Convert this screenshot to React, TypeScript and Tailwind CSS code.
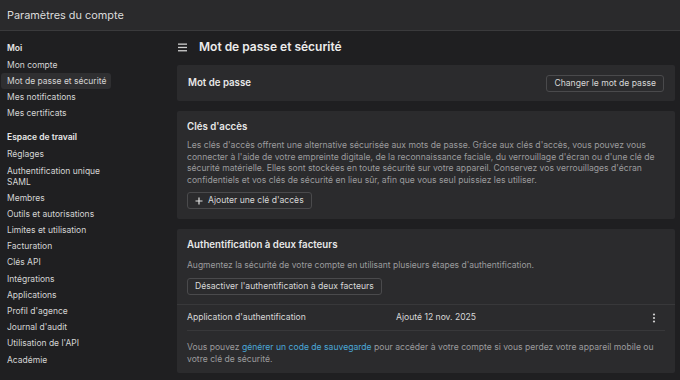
const moi = ['Mon compte', 'Mot de passe et sécurité', 'Mes notifications', 'Mes certificats'];
const workspace = [
  'Réglages',
  'Authentification unique SAML',
  'Membres',
  'Outils et autorisations',
  'Limites et utilisation',
  'Facturation',
  'Clés API',
  'Intégrations',
  'Applications',
  "Profil d'agence",
  "Journal d'audit",
  "Utilisation de l'API",
  'Académie',
];

function NavItem({ label, active }: { label: string; active?: boolean }) {
  const wraps = label.includes('SAML');
  return (
    <div
      className={`px-[6px] py-[2.6px] rounded-[3px] text-[8.5px] leading-[11px] text-[#d4d4d4] ${
        wraps ? '' : 'whitespace-nowrap'
      } ${active ? 'bg-[#2f2f31]' : ''}`}
    >
      {label}
    </div>
  );
}

function Button({ children }: { children: React.ReactNode }) {
  return (
    <button
      type="button"
      className="flex items-center gap-[5px] h-[17px] px-[7px] rounded-[3px] border border-[#4a4a4c] bg-[#2b2b2d] text-[8.6px] text-[#d8d8d8]"
    >
      {children}
    </button>
  );
}

export default function App() {
  return (
    <div
      className="w-[680px] h-[380px] overflow-hidden bg-[#1f1f21] text-[#e6e6e6] flex flex-col"
      style={{ fontFamily: 'Inter, "Noto Sans", sans-serif' }}
    >
      <header className="h-[31px] shrink-0 flex items-center px-[7px] bg-[#2a2a2c] border-b border-[#3a3a3c]">
        <span className="text-[10.9px] text-[#dcdcdc]">Paramètres du compte</span>
      </header>

      <div className="flex flex-1 min-h-0">
        <aside className="w-[165px] shrink-0 pl-[1px] pt-[11px] flex flex-col">
          <div className="px-[6px] h-[12px] flex items-center text-[8.5px] font-semibold text-[#e8e8e8] mb-[3px]">
            Moi
          </div>
          <div className="flex flex-col w-[110px]">
            {moi.map((m) => (
              <NavItem key={m} label={m} active={m === 'Mot de passe et sécurité'} />
            ))}
          </div>
          <div className="px-[6px] h-[12px] flex items-center mt-[10px] mb-[3px] text-[8.5px] font-semibold text-[#e8e8e8]">
            Espace de travail
          </div>
          <div className="flex flex-col w-[110px]">
            {workspace.map((m) => (
              <NavItem key={m} label={m} />
            ))}
          </div>
          <div className="px-[6px] h-[12px] flex items-center mt-[10px] text-[8.5px] font-semibold text-[#e8e8e8]">
            Aide et support
          </div>
        </aside>

        <main className="flex-1 pl-[12px] pr-[5px] pt-[9px] flex flex-col">
          <div className="flex items-center h-[14px] mb-[11px] pl-[1px]">
            <svg width="10" height="9" viewBox="0 0 10 9" className="mr-[11px]">
              <rect x="0" y="0.5" width="9" height="1.3" fill="#cfcfcf" />
              <rect x="0" y="3.8" width="9" height="1.3" fill="#cfcfcf" />
              <rect x="0" y="7.1" width="9" height="1.3" fill="#cfcfcf" />
            </svg>
            <h1 className="text-[12px] font-semibold text-[#ececec]">Mot de passe et sécurité</h1>
          </div>

          <section className="h-[36px] shrink-0 bg-[#2b2b2d] rounded-[2px] flex items-center justify-between pl-[11px] pr-[11px] mb-[10px]">
            <h2 className="text-[9.7px] font-semibold text-[#e8e8e8]">Mot de passe</h2>
            <Button>Changer le mot de passe</Button>
          </section>

          <section className="shrink-0 bg-[#2b2b2d] rounded-[2px] px-[10px] pt-[10px] pb-[10px] mb-[10px]">
            <h2 className="h-[12px] flex items-center text-[9.7px] font-semibold text-[#e8e8e8] mb-[7px]">
              Clés d'accès
            </h2>
            <p className="text-[8.6px] leading-[11.5px] text-[#9b9b9d] mb-[6px]">
              Les clés d'accès offrent une alternative sécurisée aux mots de passe. Grâce aux clés d'accès, vous
              pouvez vous connecter à l'aide de votre empreinte digitale, de la reconnaissance faciale, du
              verrouillage d'écran ou d'une clé de sécurité matérielle. Elles sont stockées en toute sécurité sur
              votre appareil. Conservez vos verrouillages d'écran confidentiels et vos clés de sécurité en lieu
              sûr, afin que vous seul puissiez les utiliser.
            </p>
            <Button>
              <svg width="8" height="8" viewBox="0 0 8 8">
                <path d="M4 0.5v7M0.5 4h7" stroke="#e0e0e0" strokeWidth="1.2" />
              </svg>
              Ajouter une clé d'accès
            </Button>
          </section>

          <section className="shrink-0 bg-[#2b2b2d] rounded-[2px] pt-[10px]">
            <div className="px-[10px] pb-[9px] border-b border-[#38383a]">
              <h2 className="h-[12px] flex items-center text-[9.7px] font-semibold text-[#e8e8e8] mb-[8px]">
                Authentification à deux facteurs
              </h2>
              <p className="h-[12px] flex items-center text-[8.5px] text-[#9b9b9d] mb-[7px]">
                Augmentez la sécurité de votre compte en utilisant plusieurs étapes d'authentification.
              </p>
              <Button>Désactiver l'authentification à deux facteurs</Button>
            </div>
            <div className="px-[10px]">
              <div className="h-[26px] flex items-center border-b border-[#38383a] text-[8.6px] text-[#d8d8d8]">
                <span className="w-[209px]">Application d'authentification</span>
                <span className="flex-1">Ajouté 12 nov. 2025</span>
                <svg width="4" height="10" viewBox="0 0 4 10" className="mr-[9px]">
                  <circle cx="2" cy="1.5" r="1.1" fill="#d0d0d0" />
                  <circle cx="2" cy="5" r="1.1" fill="#d0d0d0" />
                  <circle cx="2" cy="8.5" r="1.1" fill="#d0d0d0" />
                </svg>
              </div>
              <p className="pt-[11px] pb-[8px] text-[8.6px] leading-[11.5px] text-[#9b9b9d]">
                Vous pouvez <span className="text-[#4aa8d8]">générer un code de sauvegarde</span> pour accéder à
                votre compte si vous perdez votre appareil mobile ou votre clé de sécurité.
              </p>
            </div>
          </section>
        </main>
      </div>
    </div>
  );
}
